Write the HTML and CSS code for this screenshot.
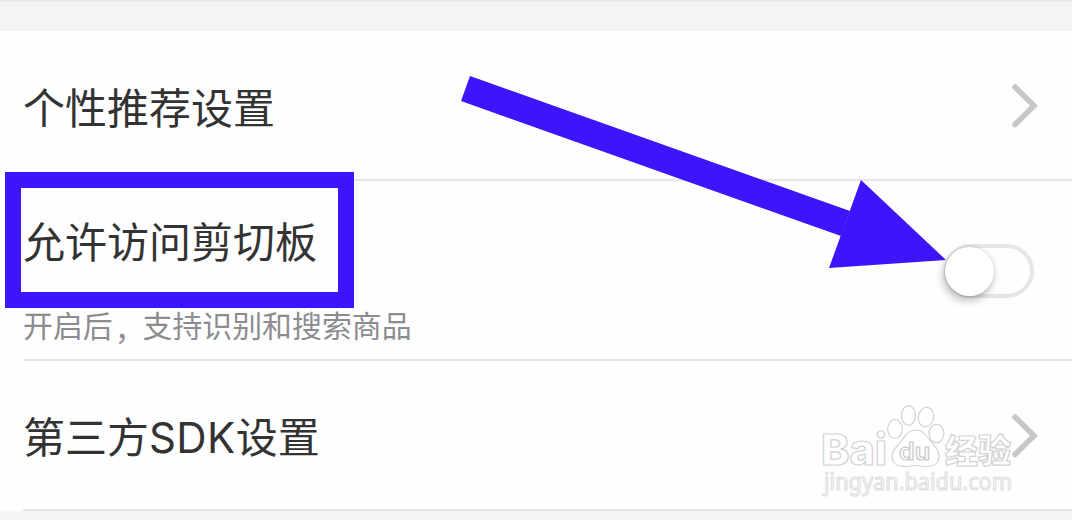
FILE: index.html
```html
<!DOCTYPE html>
<html lang="zh-CN">

<head>
    <meta charset="utf-8" />
    <title>设置</title>
    <link rel="stylesheet" href="styles.css">
</head>

<body>

    <div class="screen">
        <div class="section-gap"></div>

        <div class="row">
            <span class="title">个性推荐设置</span>
            <svg class="chevron" width="28" height="46" viewBox="0 0 28 46">
                <path d="M4 4 L23 22.7 L4 41.5" />
            </svg>
        </div>

        <div class="row row-tall">
            <div class="text">
                <span class="title">允许访问剪切板</span>
                <span class="subtitle">开启后<span class="comma">，</span>支持识别和搜索商品</span>
            </div>
            <div class="switch">
                <div class="knob"></div>
            </div>
        </div>

        <div class="row">
            <span class="title">第三方<span class="latin">SDK</span>设置</span>
            <svg class="chevron" width="28" height="46" viewBox="0 0 28 46">
                <path d="M4 4 L23 22.7 L4 41.5" />
            </svg>
        </div>

        <div class="highlight"></div>

        <svg class="arrow" width="1072" height="520" viewBox="0 0 1072 520">
            <polygon points="470,76 850,211 841,236 461,101" />
            <polygon points="861,180 946,260 829,268" />
        </svg>

        <svg class="watermark" width="200" height="110" viewBox="0 0 200 110">
            <text class="brand" x="1" y="65" textLength="66" lengthAdjust="spacingAndGlyphs">Bai</text>
            <ellipse cx="75" cy="29" rx="7.3" ry="9.5" />
            <ellipse cx="88.5" cy="15.5" rx="7" ry="9.8" />
            <ellipse cx="106" cy="17" rx="7.6" ry="9.8" transform="rotate(12 106 17)" />
            <ellipse cx="116.5" cy="33.5" rx="7.4" ry="9.2" />
            <path d="M95.5 30 C101 30 105 33 108 38 C112 44 119 48 119 56 C119 63 114 66.500 107 66.500 C102 66.500 100 65.500 95.500 65.500 C91 65.500 89 66.500 84 66.500 C77 66.500 72 63 72 56 C72 49 79 45 83 39 C86 34 90 30 95.500 30 Z" />
            <text class="du" x="79" y="60" textLength="31" lengthAdjust="spacingAndGlyphs">du</text>
            <text class="cjk" x="125" y="63" textLength="66">经验</text>
            <text class="url" x="4" y="90" textLength="188" lengthAdjust="spacingAndGlyphs">jingyan.baidu.com</text>
        </svg>
    </div>

</body>

</html>
```
FILE: styles.css
```css
* {
    box-sizing: border-box;
}

body {
    margin: 0;
    font-family: "Noto Sans CJK SC", sans-serif;
    background: #f5f5f5;
}

.screen {
    position: relative;
    width: 1072px;
    height: 520px;
    overflow: hidden;
}

.section-gap {
    height: 31px;
    background: linear-gradient(#e6e6e6, #f4f4f4 3px);
}

.row {
    display: flex;
    align-items: center;
    justify-content: space-between;
    height: 150px;
    padding: 0 33px 0 23px;
    background: linear-gradient(#e6e6e6, #e6e6e6) 23px 100% / 100% 2px no-repeat #fefefe;
}

.row-tall {
    height: 180px;
}

.text {
    display: flex;
    flex-direction: column;
    gap: 34px;
    padding-top: 21px;
}

.title {
    font-size: 42px;
    line-height: 50px;
    color: #333;
}

.latin {
    font-family: Inter, "Liberation Sans", sans-serif;
    letter-spacing: 0.4px;
}

.subtitle {
    font-size: 29.9px;
    line-height: 50px;
    color: #8c8c90;
}

.comma {
    position: relative;
    top: 3px;
    left: 2px;
}

.chevron {
    fill: none;
    stroke: #c7c7c7;
    stroke-width: 5.5;
    stroke-linecap: round;
}

.switch {
    width: 90px;
    height: 54px;
    margin-right: 5px;
    border: 4px solid #e6e6e6;
    border-radius: 27px;
}

.knob {
    width: 49px;
    height: 49px;
    margin: -1px 0 0 -3px;
    border-radius: 50%;
    background: #fff;
    box-shadow: -2px 5px 8px rgba(0, 0, 0, 0.24), 0 0 4px rgba(0, 0, 0, 0.16);
}

.highlight {
    position: absolute;
    left: 5px;
    top: 172px;
    width: 349px;
    height: 136px;
    border: 16px solid #3e14fa;
}

.arrow {
    position: absolute;
    left: 0;
    top: 0;
    fill: #3e14fa;
}

.watermark {
    position: absolute;
    left: 820px;
    top: 400px;
    fill: #fff;
    stroke: #d2d2d2;
    stroke-width: 1.2;
}

.brand {
    font: 800 43px Inter, sans-serif;
}

.du {
    font: 600 24px Inter, sans-serif;
    stroke: #c8c8c8;
}

.cjk {
    font: 900 33px "Noto Sans CJK SC", sans-serif;
}

.url {
    font: 23px "Noto Sans", sans-serif;
    stroke: #dedede;
}
```
